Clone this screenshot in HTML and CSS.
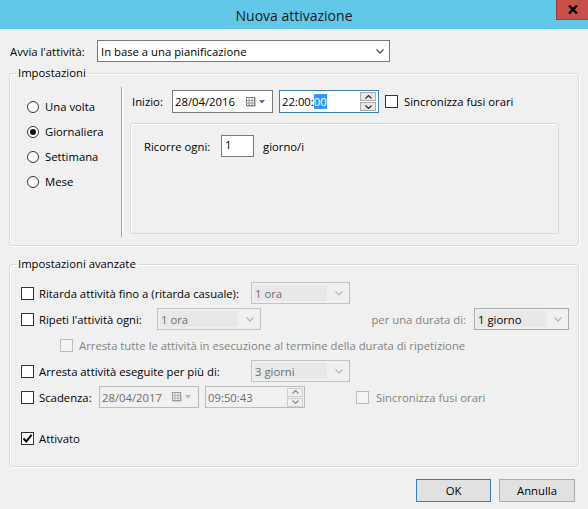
FILE: index.html
```html
<!DOCTYPE html>
<html lang="it">
<head>
<meta charset="utf-8">
<title>Nuova attivazione</title>
<link rel="stylesheet" href="styles.css">
</head>
<body>
<div class="win">
  <div class="titlebar">
    <span></span>
    <span class="title">Nuova attivazione</span>
    <span class="closewrap"><span class="close"><svg width="10" height="9" viewBox="0 0 10 9"><path d="M1 0.5 L9 8.5 M9 0.5 L1 8.5" stroke="#000" stroke-width="2.4" fill="none"/></svg></span></span>
  </div>
  <div class="body">
    <div class="row-start">
      <span class="lbl-start">Avvia l'attività:</span>
      <div class="combo main">
        <span class="val">In base a una pianificazione</span>
        <svg class="chev" width="8" height="5" viewBox="0 0 8 5"><path d="M0.5 0.5 L4 4 L7.5 0.5" stroke="#555" stroke-width="1.3" fill="none"/></svg>
      </div>
    </div>

    <fieldset class="grp g1">
      <legend>Impostazioni</legend>
      <div class="sched">
        <div class="radios">
          <div class="radio"><span class="rb"></span>Una volta</div>
          <div class="radio"><span class="rb on"></span>Giornaliera</div>
          <div class="radio"><span class="rb"></span>Settimana</div>
          <div class="radio"><span class="rb"></span>Mese</div>
        </div>
        <div class="sep"></div>
        <div class="right">
          <div class="startrow">
            <span class="lbl-inizio">Inizio:</span>
            <div class="dt date">
              <span class="val">28/04/2016</span>
              <svg class="cal" width="20" height="10" viewBox="0 0 20 10"><rect x="0.5" y="0.5" width="8" height="8" fill="#fff" stroke="#7a7a7a"/><path d="M0.5 3.5 H8.5 M0.5 6 H8.5 M3 0.5 V8.5 M6 0.5 V8.5" stroke="#9a9a9a"/><path d="M1 9.5 H9.5 V1" stroke="#c8c8c8" fill="none"/><path d="M13 3 H19 L16 6.5 Z" fill="#4a6a9a"/></svg>
            </div>
            <div class="dt time focus">
              <span class="val">22:00:<span class="sel">00</span></span>
              <div class="spin"><span class="sb"><svg width="7" height="4" viewBox="0 0 7 4"><path d="M0.5 3.5 L3.5 0.5 L6.5 3.5" stroke="#222" stroke-width="1.1" fill="none"/></svg></span><span class="sb"><svg width="7" height="4" viewBox="0 0 7 4"><path d="M0.5 0.5 L3.5 3.5 L6.5 0.5" stroke="#222" stroke-width="1.1" fill="none"/></svg></span></div>
            </div>
            <span class="cb"></span>
            <span class="cbtext">Sincronizza fusi orari</span>
          </div>
          <div class="panel">
            <div class="recur">
              <span class="lbl-recur">Ricorre ogni:</span>
              <div class="numbox">1</div>
              <span>giorno/i</span>
            </div>
          </div>
        </div>
      </div>
    </fieldset>

    <fieldset class="grp g2">
      <legend>Impostazioni avanzate</legend>
      <div class="adv">
        <div class="arow">
          <div class="chkl w230"><span class="cb"></span><span>Ritarda attività fino a (ritarda casuale):</span></div>
          <div class="combo dis w99"><span class="inner">1 ora</span><svg class="chev" width="8" height="5" viewBox="0 0 8 5"><path d="M0.5 0.5 L4 4 L7.5 0.5" stroke="#b5b5b5" stroke-width="1.2" fill="none"/></svg></div>
        </div>
        <div class="arow">
          <div class="chkl w136"><span class="cb"></span><span>Ripeti l'attività ogni:</span></div>
          <div class="combo dis w104"><span class="inner">1 ora</span><svg class="chev" width="8" height="5" viewBox="0 0 8 5"><path d="M0.5 0.5 L4 4 L7.5 0.5" stroke="#b5b5b5" stroke-width="1.2" fill="none"/></svg></div>
          <div class="durata">
            <span class="grey">per una durata di:</span>
            <div class="combo dis2 w95"><span class="inner">1 giorno</span><svg class="chev" width="8" height="5" viewBox="0 0 8 5"><path d="M0.5 0.5 L4 4 L7.5 0.5" stroke="#b5b5b5" stroke-width="1.2" fill="none"/></svg></div>
          </div>
        </div>
        <div class="arow indent">
          <span class="cb dcb"></span><span class="grey gap6">Arresta tutte le attività in esecuzione al termine della durata di ripetizione</span>
        </div>
        <div class="arow">
          <div class="chkl w230"><span class="cb"></span><span>Arresta attività eseguite per più di:</span></div>
          <div class="combo dis w99"><span class="inner">3 giorni</span><svg class="chev" width="8" height="5" viewBox="0 0 8 5"><path d="M0.5 0.5 L4 4 L7.5 0.5" stroke="#b5b5b5" stroke-width="1.2" fill="none"/></svg></div>
        </div>
        <div class="arow">
          <div class="chkl w78"><span class="cb"></span><span>Scadenza:</span></div>
          <div class="dt ddis date2">
            <span class="val">28/04/2017</span>
            <svg class="cal" width="20" height="10" viewBox="0 0 20 10"><rect x="0.5" y="0.5" width="8" height="8" fill="#f4f4f4" stroke="#9a9a9a"/><path d="M0.5 3.5 H8.5 M0.5 6 H8.5 M3 0.5 V8.5 M6 0.5 V8.5" stroke="#b0b0b0"/><path d="M1 9.5 H9.5 V1" stroke="#d0d0d0" fill="none"/><path d="M13 3 H19 L16 6.5 Z" fill="#b8b8b8"/></svg>
          </div>
          <div class="dt ddis time2">
            <span class="val">09:50:43</span>
            <div class="spin"><span class="sb sbd"><svg width="7" height="4" viewBox="0 0 7 4"><path d="M0.5 3.5 L3.5 0.5 L6.5 3.5" stroke="#8a8a8a" stroke-width="1.1" fill="none"/></svg></span><span class="sb sbd"><svg width="7" height="4" viewBox="0 0 7 4"><path d="M0.5 0.5 L3.5 3.5 L6.5 0.5" stroke="#8a8a8a" stroke-width="1.1" fill="none"/></svg></span></div>
          </div>
          <span class="cb dcb sync2"></span><span class="grey gap7">Sincronizza fusi orari</span>
        </div>
        <div class="arow attiv">
          <div class="chkl"><span class="cb checked"><svg width="11" height="11" viewBox="0 0 11 11"><path d="M1.5 5.5 L4.3 8.5 L9.5 1.8" stroke="#000" stroke-width="2" fill="none"/></svg></span><span>Attivato</span></div>
        </div>
      </div>
    </fieldset>

    <div class="buttons">
      <button class="btn ok">OK</button>
      <button class="btn cancel">Annulla</button>
    </div>
  </div>
</div>
</body>
</html>
```

FILE: styles.css
```css
* { box-sizing: border-box; }
html, body { margin: 0; padding: 0; }
body {
  background: #f0f0f0;
  font-family: "Open Sans", "Noto Sans", sans-serif;
  font-size: 11.3px;
  color: #000;
}
.win {
  width: 588px;
  height: 509px;
  display: flex;
  flex-direction: column;
  overflow: hidden;
}
.titlebar {
  height: 29px;
  background: #63c8e8;
  display: grid;
  grid-template-columns: 1fr auto 1fr;
}
.title {
  align-self: center;
  font-size: 14px;
  color: #1c1c1c;
  padding-top: 1px;
}
.closewrap { justify-self: end; }
.close {
  display: flex;
  width: 32px;
  height: 20px;
  background: #c7504b;
  border-left: 1px solid #9e3a36;
  border-bottom: 1px solid #9e3a36;
  align-items: center;
  justify-content: center;
}
.body {
  padding: 11px 9px 0 9px;
  display: flex;
  flex-direction: column;
}
.row-start {
  display: flex;
  align-items: center;
  height: 22px;
}
.lbl-start { width: 88px; padding-left: 1px; }
.combo {
  height: 22px;
  border: 1px solid #7a7a7a;
  background: #fff;
  display: flex;
  align-items: center;
}
.combo .val { flex: 1; }
.combo.main { width: 293px; padding-left: 3px; padding-right: 5px; }
.chev { flex: none; }

.grp {
  margin: 0;
  padding: 0;
  min-width: 0;
  border: 1px solid #d5dbe0;
  border-radius: 3px;
  box-shadow: inset 1px 1px 0 #fff, 1px 1px 0 #fff;
}
.grp legend {
  margin-left: 6px;
  padding: 0 2px;
  line-height: 14px;
}
.g1 { margin-top: 4px; }
.g2 { margin-top: 11px; }

.sched {
  display: flex;
  padding: 7px 0 8px 0;
}
.radios {
  width: 111px;
  padding: 7px 0 0 17px;
  display: flex;
  flex-direction: column;
}
.radio {
  height: 25px;
  display: flex;
  align-items: center;
  gap: 6px;
}
.rb {
  width: 12px;
  height: 12px;
  border: 1px solid #333;
  border-radius: 50%;
  background: #fff;
  display: flex;
  align-items: center;
  justify-content: center;
}
.rb.on::after {
  content: "";
  width: 6px;
  height: 6px;
  border-radius: 50%;
  background: #111;
}
.sep {
  width: 2px;
  border-left: 1px solid #a0a0a0;
  border-right: 1px solid #fff;
}
.right {
  padding: 3px 0 3px 7px;
  display: flex;
  flex-direction: column;
}
.startrow {
  display: flex;
  align-items: center;
  height: 23px;
  padding-left: 2px;
}
.lbl-inizio { width: 40px; }
.dt {
  height: 23px;
  border: 1px solid #7a7a7a;
  background: #fff;
  display: flex;
  align-items: center;
  padding-left: 2px;
}
.dt .val { flex: 1; }
.date { width: 101px; padding-right: 6px; }
.time { width: 100px; margin-left: 6px; padding-right: 2px; }
.time.focus { border-color: #3c7fb1; }
.sel { background: #3399ff; color: #fff; }
.spin {
  display: flex;
  flex-direction: column;
  gap: 1px;
}
.sb {
  width: 16px;
  height: 9px;
  background: #e6e6e6;
  border: 1px solid #acacac;
  display: flex;
  align-items: center;
  justify-content: center;
}
.sbd { background: #efefef; border-color: #cdcdcd; }
.cb {
  flex: none;
  width: 13px;
  height: 13px;
  border: 1px solid #333;
  background: #fff;
  display: flex;
  align-items: center;
  justify-content: center;
}
.startrow .cb { margin-left: 6px; }
.cbtext { margin-left: 6px; }
.dcb { border-color: #bcbcbc; background: #f4f4f4; }
.panel {
  margin-top: 10px;
  width: 429px;
  height: 111px;
  border: 1px solid #d5dbe0;
  border-radius: 3px;
  box-shadow: inset 1px 1px 0 #fff;
  padding: 11px 0 0 13px;
}
.recur {
  display: flex;
  align-items: center;
  height: 22px;
}
.lbl-recur { width: 77px; }
.numbox {
  width: 33px;
  height: 22px;
  border: 1px solid #7a7a7a;
  background: #fff;
  padding: 1px 0 0 3px;
  margin-right: 9px;
  line-height: 15px;
}

.adv {
  padding: 11px 9px 17px 11px;
  display: flex;
  flex-direction: column;
  gap: 4px;
}
.arow {
  height: 22px;
  display: flex;
  align-items: center;
}
.chkl {
  display: flex;
  align-items: center;
  gap: 5px;
}
.w230 { width: 230px; }
.w136 { width: 136px; }
.w78 { width: 78px; }
.w99 { width: 99px; }
.w104 { width: 104px; }
.w95 { width: 95px; }
.combo.dis, .combo.dis2 {
  border-color: #c3c3c3;
  background: #f0f0f0;
  padding: 2px 6px 2px 2px;
  color: #6d6d6d;
}
.combo.dis2 { border-color: #acacac; color: #000; }
.combo .inner {
  flex: 1;
  height: 100%;
  background: #e8e8e8;
  display: flex;
  align-items: center;
  padding-left: 1px;
  margin-right: 8px;
}
.durata {
  margin-left: auto;
  display: flex;
  align-items: center;
  gap: 8px;
}
.grey { color: #838383; }
.indent { padding-left: 39px; }
.gap6 { margin-left: 6px; }
.gap7 { margin-left: 7px; }
.ddis {
  height: 22px;
  border-color: #bcbcbc;
  background: #f0f0f0;
  color: #6d6d6d;
}
.date2 { width: 100px; padding-right: 6px; }
.time2 { width: 100px; margin-left: 6px; padding-right: 1px; }
.sync2 { margin-left: 51px; }
.attiv { margin-top: 15px; }
.checked { background: #fff; }

.buttons {
  margin-top: 12px;
  display: flex;
  justify-content: flex-end;
  gap: 8px;
  padding-right: 4px;
}
.btn {
  height: 23px;
  background: #e1e1e1;
  border: 1px solid #adadad;
  font-family: inherit;
  font-size: 11.3px;
  color: #000;
  padding: 0;
}
.ok { width: 75px; border-color: #3c7fb1; }
.cancel { width: 76px; }
```
